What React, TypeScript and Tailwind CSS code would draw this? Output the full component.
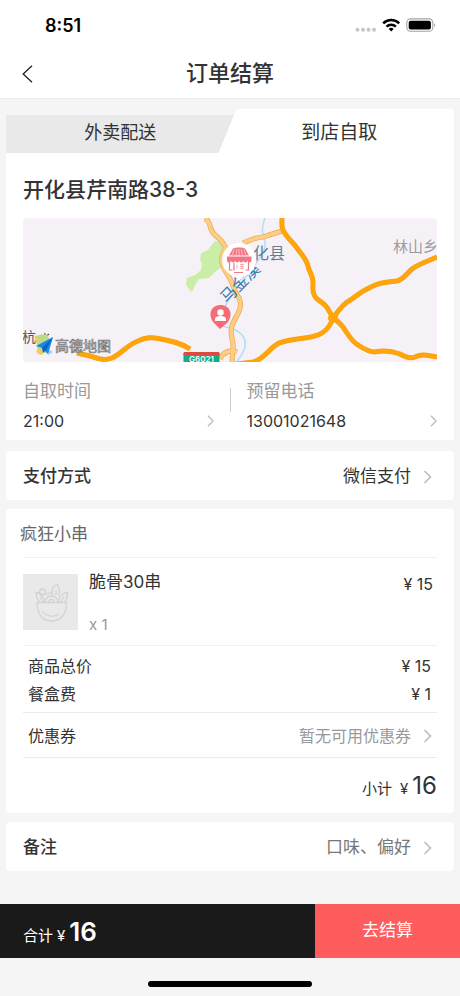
import { useState } from "react";
import type { ReactNode } from "react";
import clsx from "clsx";

const tabs = [
  { id: "delivery", label: "外卖配送" },
  { id: "pickup", label: "到店自取" },
];

const fees = [
  { label: "商品总价", amount: 15 },
  { label: "餐盒费", amount: 1 },
];

// drawn twice each: casing first, then the lighter fill on top
const sideRoads =
  "M182 0c7 4 3 11 10 17 6 5 7 6 11 13-6 8-5 17 0 24 8 11 6 16 13 26 5 11-4 18-7 28-3 9 2 14 1 22l-1 16M220 25c8-3 13-6 20-6l22-7M197 141c3-7 11-10 17-7";
const highways = [
  "M259 0c0 6-1 10 2 14 4 7 9 10 13 16 4 6 9 10 11 18 1 6 5 9 5 16 0 7-1 12 4 17 5 4 9 5 12 12 3 6 9 10 14 16 5 7 8 14 15 18 6 4 11 7 17 7 9-2 17-1 25 2 5 3 10 5 15 3 8-4 14-1 22 0",
  "M414 39c-8 4-17 6-25 12-6 5-8 10-15 12-8 1-16 1-24 5-9 4-15 8-21 13-8 4-12 10-19 19-4 12-11 17-22 19-12 2-21 2-32 6-11 6-14 16-26 19l-16 2",
  "M54 135l13 3c9 3 14 5 22 2 9-4 15-13 26-17 8-4 14-4 23-2 10 2 20 4 29 10",
];

function Chevron({ className }: { className?: string }) {
  return (
    <svg viewBox="0 0 8 14" fill="none" stroke="#bdbdbd" strokeWidth="1.6" className={clsx("shrink-0", className)} aria-hidden="true">
      <path d="M1 1l6 6-6 6" />
    </svg>
  );
}

function StatusBar() {
  return (
    <div className="flex h-[51px] items-center justify-between pl-[45px] pr-6">
      <span className="text-lg font-semibold text-black">8:51</span>
      <svg width="81" height="18" viewBox="0 0 81 18" aria-hidden="true">
        <g fill="#c6c6c6">
          <circle cx="2.5" cy="12.8" r="2" />
          <circle cx="8" cy="12.8" r="2" />
          <circle cx="13.5" cy="12.8" r="2" />
          <circle cx="19" cy="12.8" r="2" />
        </g>
        <g fill="none" stroke="#000" strokeWidth="2.5">
          <path d="M28.2 6.4a11.3 11.3 0 0 1 16 0" />
          <path d="M31.5 9.6a6.7 6.7 0 0 1 9.4 0" />
        </g>
        <path d="M36.2 14.6l-2.5-2.6a3.6 3.6 0 0 1 5 0z" fill="#000" />
        <rect x="51.8" y="1.9" width="26" height="12.4" rx="3.8" fill="none" stroke="#a3a3a3" strokeWidth="1.1" />
        <rect x="53.7" y="3.8" width="22.2" height="8.6" rx="2" fill="#000" />
        <path d="M79.2 6.2c1.4.5 1.4 3.3 0 3.8z" fill="#a3a3a3" />
      </svg>
    </div>
  );
}

function StoreMap() {
  return (
    <svg viewBox="0 0 414 144" preserveAspectRatio="xMidYMid slice" className="h-36 w-full rounded-sm bg-[#f6f1f6]" role="img" aria-label="门店地图">
      <path d="M192 23l8 2 5 4-1 13-4 6-8 6-6 6-10 1-3 4-4 9-3-3-3-4 1-7 8-3 6-5 1-6-2-4 1-7 7-3z" fill="#c8eea8" />
      <g fill="none" stroke="#b4def6" strokeWidth="1.6">
        <path d="M242 0c-3 8-4 14 0 24 1 8-4 14-8 20-10 16-25 28-32 45" />
        <path d="M199 108c8 2 15 3 20 9 7 8 3 17-6 27" />
      </g>
      <g fill="none" strokeLinejoin="round">
        <path d={sideRoads} stroke="#eda858" strokeWidth="5.2" />
        <path d={sideRoads} stroke="#fdcd83" strokeWidth="3.8" />
        {highways.map((d) => (
          <path key={d} d={d} stroke="#f2a014" strokeWidth="5" />
        ))}
        {highways.map((d) => (
          <path key={d} d={d} stroke="#ffa50a" strokeWidth="4" />
        ))}
      </g>
      <circle cx="310" cy="100" r="5" fill="#ffa50a" />

      {/* place names */}
      <text x="230" y="41" fontSize="16" fill="#5f7f96">化县</text>
      <text x="370" y="34" fontSize="15" fill="#9b9b9d">林山乡</text>
      <text x="204" y="86" fontSize="16" fill="#2f79b3" transform="rotate(-45 204 86)">马金溪</text>
      <text x="-1" y="124" fontSize="14" fill="#555">杭</text>
      <path d="M13 120l6-3M20 124l2-9m-1 5l5-4" stroke="#555" strokeWidth="1.2" fill="none" />

      {/* road badge */}
      <rect x="160.5" y="134" width="36" height="14" rx="1.5" fill="#12ac8c" />
      <path d="M162 134h33a1.5 1.5 0 0 1 1.5 1.5v2h-36v-2a1.5 1.5 0 0 1 1.500-1.500z" fill="#dc4a42" />
      <text x="178.5" y="144" fontSize="8" fontWeight="600" textAnchor="middle" fill="#fff">G6021</text>

      {/* store pin */}
      <path d="M216 63l-6-6h12z" fill="#fff" />
      <circle cx="216" cy="42" r="17" fill="#fff" />
      <path d="M210 30.500c2-1.500 10-1.500 12 0l4 7h-20z" fill="#f27782" />
      <path d="M204 38.500h24.500v4a2 2 0 0 1-4.100 0 2 2 0 0 1-4.100 0 2 2 0 0 1-4.100 0 2 2 0 0 1-4.100 0 2 2 0 0 1-4.100 0 2 2 0 0 1-4.100 0z" fill="#f27782" />
      <path d="M211.500 31l-3 7m5.500-7l-1.200 7M216 31v7m2.200-7l1.200 7m1.100-7l3 7" stroke="#fff" strokeWidth=".5" />
      <path d="M206.500 44v8h3M211 45v7.500M225.500 44v8h-3M211 54.500h9" stroke="#f27782" strokeWidth="1.200" fill="none" />
      <path d="M214 46.500v4M217 46.500h4m-4 4h4m-2-4v4m-2-2h4" stroke="#f49aa2" strokeWidth=".8" fill="none" />

      {/* customer pin */}
      <path d="M197 111l-6-6c-7-8-3-18 6.500-18s13.500 10 6.500 18z" fill="#f66c76" />
      <circle cx="197.500" cy="94.500" r="3.200" fill="#fff" />
      <path d="M192 103v-2c0-4 11-4 11 0v2z" fill="#fff" />

      {/* map provider mark */}
      <path d="M12 118l12-2 4 9-4 10-9-1z" fill="#b7dc8b" />
      <path d="M11 117l6 4-3 4zM13 133l5-4 2 8-5-1z" fill="#f6c95d" />
      <path d="M22 130l8 4-5 3z" fill="#a9c8f4" />
      <path d="M30 119l-17 9 6 2 6 6z" fill="#1688ee" />
      <path d="M30 119l-11 11 1 5 3-3z" fill="#0d62bd" />
      <text x="32" y="133" fontSize="14" fill="#f6f1f6" stroke="#777" strokeWidth=".7">高德地图</text>
    </svg>
  );
}

function InfoField({ label, value }: { label: string; value: string }) {
  return (
    <button type="button" className="flex-1 text-left">
      <span className="block text-[17px] leading-[30px] text-[#999]">{label}</span>
      <span className="flex items-center justify-between text-base leading-[30px]">
        {value}
        <Chevron className="h-3 w-[7px]" />
      </span>
    </button>
  );
}

function LinkCard({ label, value, muted }: { label: string; value: string; muted?: boolean }) {
  return (
    <button type="button" className="flex h-[49px] w-full items-center rounded-sm bg-white pt-0.5 pl-[17px] pr-[22px] text-[17px]">
      <span className="font-medium">{label}</span>
      <span className={clsx("ml-auto mr-3", muted && "text-[#777]")}>{value}</span>
      <Chevron className="h-3.5 w-[9px]" />
    </button>
  );
}

function Money({ children, className }: { children: ReactNode; className?: string }) {
  return <span className={clsx("ml-auto whitespace-nowrap", className)}>¥ {children}</span>;
}

export default function App() {
  const [tab, setTab] = useState("pickup");

  return (
    <div className="flex min-h-screen flex-col bg-[#f5f5f5] font-[Inter,'Noto_Sans_CJK_SC',sans-serif] text-[#333]">
      <header className="border-b border-[#ececec] bg-white">
        <StatusBar />
        <div className="grid h-[47px] grid-cols-[56px_1fr_56px] items-center pb-0.5">
          <button type="button" aria-label="返回" className="flex h-full items-center pl-[22px]">
            <svg width="11" height="18" viewBox="0 0 11 18" fill="none" stroke="#222" strokeWidth="1.3" aria-hidden="true">
              <path d="M10 .7L1.2 9l8.8 8.3" />
            </svg>
          </button>
          <h1 className="text-center text-[22px] font-medium">订单结算</h1>
        </div>
      </header>

      <main className="px-1.5 pt-2.5 pb-8">
        <section>
          <div className="flex h-11 items-end" role="tablist">
            <button
              type="button"
              role="tab"
              aria-selected={tab === tabs[0].id}
              onClick={() => setTab(tabs[0].id)}
              className="h-[38px] w-[51%] bg-[#e9e9e9] pb-0.5 text-lg [clip-path:polygon(0_0,100%_0,calc(100%-15px)_100%,0_100%)]"
            >
              {tabs[0].label}
            </button>
            <button
              type="button"
              role="tab"
              aria-selected={tab === tabs[1].id}
              onClick={() => setTab(tabs[1].id)}
              className="-ml-4 h-full flex-1 rounded-tr-sm bg-white pt-1 pl-1.5 text-[19px] [clip-path:polygon(18px_0,100%_0,100%_100%,0_100%)]"
            >
              {tabs[1].label}
            </button>
          </div>
          <div className="bg-white px-[17px] pt-5 pb-1">
            <h2 className="mb-3 text-[21px] leading-[33px] font-medium">开化县芹南路38-3</h2>
            <StoreMap />
            <div className="flex pt-3.5">
              <InfoField label="自取时间" value="21:00" />
              <div className="mx-4 mt-3 h-6 border-l border-[#ccc]" />
              <InfoField label="预留电话" value="13001021648" />
            </div>
          </div>
        </section>

        <div className="mt-[11px]">
          <LinkCard label="支付方式" value="微信支付" />
        </div>

        <section className="mt-[9px] rounded-sm bg-white px-[17px]">
          <h2 className="-mx-[3px] h-12 text-[17px] leading-[50px] text-[#666]">疯狂小串</h2>
          <div className="flex h-[89px] gap-[11px] border-y border-[#f0f0f0] pt-4 pr-1 text-[17px]">
            <div className="flex h-14 w-[55px] items-center justify-center bg-[#e9e9e9]">
              <svg width="36" height="40" viewBox="0 0 36 40" fill="none" stroke="#d3d3d3" strokeWidth="1.3" strokeLinejoin="round" aria-hidden="true">
                <path d="M4 20.500h29.500c0 12-6 18.500-14.800 18.500S4 32.500 4 20.500zM9.500 29c3 5 11 7 16 3" />
                <path d="M6 20c-2-3-3-6-3-9.500 2.500.2 4.500 1.500 6 3.500 2 2 2.500 4 2.500 6.500M7 15l2.500 5" />
                <circle cx="9.500" cy="9.800" r="2.800" />
                <path d="M12 20.500c0-9 13-9 13 0M15.500 20.500c.5-4 5.500-4 6 0M12.500 13c2-2 5-2.500 7-1" />
                <path d="M19.500 12c-1-4 .5-8 4.500-10 2.500 4 3 8 1.500 12M23 8v5" />
                <path d="M25.500 20c0-5 3-9 9-9.500.2 4-.8 7-3 9.500M31 14l-3 6" />
              </svg>
            </div>
            <div className="flex flex-col justify-between">
              <h3 className="-mt-1 leading-6">脆骨30串</h3>
              <span className="mb-2.5 text-[15px] leading-5 text-[#999]">x 1</span>
            </div>
            <Money className="-mt-0.5 text-base leading-6">15</Money>
          </div>

          <dl className="border-b border-[#ebebeb] pt-1.5 pb-1 pr-1.5 pl-[5px] text-base">
            {fees.map((fee) => (
              <div key={fee.label} className="flex h-7 items-center">
                <dt>{fee.label}</dt>
                <dd className="ml-auto">
                  <Money>{fee.amount}</Money>
                </dd>
              </div>
            ))}
          </dl>

          <button type="button" className="flex h-[45px] w-full items-center border-b border-[#ebebeb] px-[5px] pt-0.5 text-base">
            优惠券
            <span className="mr-3 ml-auto text-[#999]">暂无可用优惠券</span>
            <Chevron className="h-3.5 w-[9px]" />
          </button>

          <div className="flex h-[55px] items-baseline justify-end pt-3">
            <span className="mr-2 text-[15px]">小计</span>
            <span className="mr-1 text-[15px]">¥</span>
            <span className="text-2xl">16</span>
          </div>
        </section>

        <div className="mt-[9px]">
          <LinkCard label="备注" value="口味、偏好" muted />
        </div>
      </main>

      <footer className="mt-auto">
        <div className="flex h-[54px] bg-[#1a1a1a] text-white">
          <div className="flex flex-1 items-baseline pt-2 pl-[23px]">
            <span className="mr-1 text-[15px]">合计</span>
            <span className="mr-1 text-[15px]">¥</span>
            <span className="text-[26px] font-semibold">16</span>
          </div>
          <button type="button" className="w-[145px] bg-[#ff5c5e] text-[17px]">
            去结算
          </button>
        </div>
        <div className="flex h-[38px] items-center justify-center pt-[14px]">
          <div className="h-1.5 w-[164px] rounded-full bg-black" />
        </div>
      </footer>
    </div>
  );
}
